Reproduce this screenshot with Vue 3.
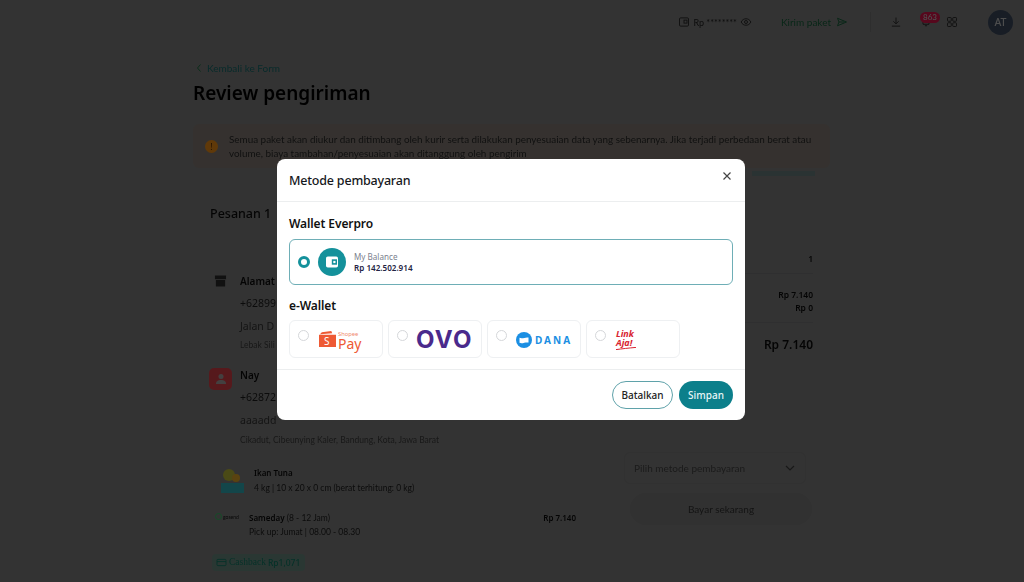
<script setup>
const ewallets = [
  { id: 'shopee' },
  { id: 'ovo' },
  { id: 'dana' },
  { id: 'link' },
]
</script>

<template>
  <div class="screen">
    <div class="page">
      <header class="topbar">
        <svg class="ic" viewBox="0 0 16 16"><rect x="2" y="2.500" width="12" height="11" rx="1.500"/><rect x="8" y="5.500" width="4" height="4"/></svg>
        <span class="balance">Rp ********</span>
        <svg class="ic eye" viewBox="0 0 16 16"><path d="M1.500 8C3 5 5.200 3.700 8 3.700S13 5 14.500 8C13 11 10.800 12.300 8 12.300S3 11 1.500 8Z"/><circle cx="8" cy="8" r="2"/></svg>
        <span class="send">Kirim paket</span>
        <svg class="ic green" viewBox="0 0 16 16"><path d="M2 3l12 5-12 5 2-5zM4 8h7"/></svg>
        <i class="vline"></i>
        <svg class="ic dl" viewBox="0 0 16 16"><path d="M8 2v8M4.500 7L8 10.500 11.500 7M2.500 13.500h11"/></svg>
        <span class="bell"><svg class="ic" viewBox="0 0 16 16"><path d="M4 7a4 4 0 0 1 8 0v4H4zM6.500 13h3"/></svg><b class="badge">863</b></span>
        <svg class="ic apps" viewBox="0 0 16 16"><rect x="2" y="2" width="5" height="5" rx="1"/><rect x="9" y="2" width="5" height="5" rx="1"/><rect x="2" y="9" width="5" height="5" rx="1"/><rect x="9" y="9" width="5" height="5" rx="1"/></svg>
        <span class="avatar">AT</span>
      </header>

      <main class="content">
        <a class="back"><svg viewBox="0 0 8 10"><path d="M5.500 1.500L2.500 5l3 3.500"/></svg>Kembali ke Form</a>
        <h1>Review pengiriman</h1>
        <div class="alert">
          <span class="alert-ic">!</span>
          <p>Semua paket akan diukur dan ditimbang oleh kurir serta dilakukan penyesuaian data yang sebenarnya. Jika terjadi perbedaan berat atau volume, biaya tambahan/penyesuaian akan ditanggung oleh pengirim</p>
        </div>

        <div class="columns">
          <section class="order">
            <h2>Pesanan 1</h2>
            <div class="party first">
              <span class="party-ic store"><svg viewBox="0 0 14 14"><path d="M1 1h12v4H1zM2 6h10v7H2z"/></svg></span>
              <div>
                <strong>Alamat</strong>
                <p>+62899</p>
                <p class="muted">Jalan D</p>
                <small>Lebak Sili</small>
              </div>
            </div>
            <div class="party second">
              <span class="party-ic person"><svg viewBox="0 0 14 14"><circle cx="7" cy="4.500" r="2.500"/><path d="M2 12c0-3 2-4 5-4s5 1 5 4z"/></svg></span>
              <div>
                <strong>Nay</strong>
                <p>+62872</p>
                <p class="muted">aaaadd</p>
                <small>Cikadut, Cibeunying Kaler, Bandung, Kota, Jawa Barat</small>
              </div>
            </div>
            <div class="product">
              <svg class="thumb" viewBox="0 0 26 28"><circle cx="10" cy="8" r="6" fill="#b8b838"/><circle cx="17" cy="11" r="4" fill="#e0a828"/><rect x="2" y="16" width="23" height="10" fill="#30b0b8"/></svg>
              <div>
                <strong>Ikan Tuna</strong>
                <p>4 kg | 10 x 20 x 0 cm (berat terhitung: 0 kg)</p>
              </div>
            </div>
            <div class="courier">
              <span class="gosend"><i></i>gosend</span>
              <div class="courier-text">
                <p><strong>Sameday</strong> (8 - 12 Jam)</p>
                <p>Pick up: Jumat | 08.00 - 08.30</p>
              </div>
              <strong>Rp 7.140</strong>
            </div>
            <span class="cashback"><svg viewBox="0 0 12 10"><rect x="1" y="1.500" width="10" height="7" rx="1"/><path d="M1 4h10"/></svg>Cashback <b>Rp1,071</b></span>
          </section>

          <aside class="summary">
            <i class="accent"></i>
            <div class="sum-row first"><b>1</b></div>
            <div class="sum-row"><b>Rp 7.140</b></div>
            <div class="sum-row tight"><b>Rp 0</b></div>
            <div class="sum-row total"><b>Rp 7.140</b></div>
            <div class="select"><span>Pilih metode pembayaran</span><svg viewBox="0 0 12 12"><path d="M2 4l4 4 4-4"/></svg></div>
            <div class="pay">Bayar sekarang</div>
          </aside>
        </div>
      </main>
    </div>

    <div class="overlay">
      <div class="modal">
        <div class="modal-head">
          <span>Metode pembayaran</span>
          <svg class="close" viewBox="0 0 10 10"><path d="M1.500 1.500l7 7M8.500 1.500l-7 7"/></svg>
        </div>
        <div class="modal-body">
          <h3>Wallet Everpro</h3>
          <div class="balance-card">
            <span class="radio on"></span>
            <span class="wallet">
              <svg viewBox="0 0 14 14"><rect x="1" y="1.500" width="12" height="11" rx="1.800" fill="#fff"/><rect x="6.800" y="4.300" width="5.200" height="5.400" fill="#14919b"/><rect x="8.300" y="5.900" width="2.200" height="2.200" fill="#fff"/></svg>
            </span>
            <div class="balance-text">
              <span>My Balance</span>
              <b>Rp 142.502.914</b>
            </div>
          </div>
          <h3 class="second">e-Wallet</h3>
          <div class="wallets">
            <div v-for="w in ewallets" :key="w.id" class="wallet-card">
              <span class="radio"></span>
              <div v-if="w.id === 'shopee'" class="logo shopee">
                <svg viewBox="0 0 20 18"><path d="M2 4.500L15 3.500 14 1 4 2.500zM1 5h18v13H1z" fill="#ee5a34"/></svg>
                <em>S</em>
                <span class="sp"><small>Shopee</small><b>Pay</b></span>
              </div>
              <div v-else-if="w.id === 'ovo'" class="logo ovo">OVO</div>
              <div v-else-if="w.id === 'dana'" class="logo dana">
                <svg viewBox="0 0 16 16"><circle cx="8" cy="8" r="8" fill="#1b8fe3"/><path d="M3.500 5.800c3 1.400 6-1 9-.2v5c-3-.8-6 1.400-9 .2z" fill="#fff"/></svg>
                <span>DANA</span>
              </div>
              <div v-else class="logo link">
                <span>Link<br />Aja!</span>
                <svg viewBox="0 0 20 3"><path d="M0 2.600C6 1.800 13 1 20 .4" /></svg>
              </div>
            </div>
          </div>
        </div>
        <div class="modal-foot">
          <button class="btn ghost">Batalkan</button>
          <button class="btn solid">Simpan</button>
        </div>
      </div>
    </div>
  </div>
</template>

<style>
html, body { margin: 0; background: #fff; }
</style>

<style scoped>
* { box-sizing: border-box; }
.screen {
  position: relative;
  width: 1024px;
  height: 582px;
  overflow: hidden;
  font-family: "Noto Sans", Inter, sans-serif;
  color: #0c0c0c;
}
.page { height: 582px; overflow: hidden; background: #808080; filter: blur(.5px); }

.topbar { height: 44px; display: flex; align-items: center; justify-content: flex-end; padding-right: 11px; font-family: Lato, sans-serif; font-size: 9px; color: #1c1c1c; }
.ic { width: 12px; height: 12px; fill: none; stroke: #2a2a2a; stroke-width: 1.300; flex: none; }
.balance { margin-left: 3px; }
.eye { margin-left: 3px; }
.send { margin-left: 29px; font-size: 10px; color: #15603a; }
.green { stroke: #15603a; margin-left: 5px; }
.vline { width: 1px; height: 20px; background: #747474; margin: 0 19px 0 22px; }
.dl { margin-right: 18px; }
.bell { position: relative; display: block; height: 12px; width: 12px; margin-right: 14px; }
.badge { position: absolute; top: -4px; left: 0; width: 20px; text-align: center; background: #d8144a; border-radius: 6px; color: #c8c8c8; font-size: 8px; font-weight: 500; line-height: 11px; }
.apps { margin-right: 30px; }
.avatar { width: 25px; height: 25px; border-radius: 50%; background: #3c4a5e; color: #c0c0c0; display: flex; align-items: center; justify-content: center; font-family: "Noto Sans", sans-serif; font-size: 10.500px; font-weight: 500; }

.content { padding: 18px 0 0 193px; width: 830px; }
.back { display: flex; align-items: center; color: #166a6a; font-family: Lato, sans-serif; font-size: 10px; line-height: 12px; margin-left: 2px; }
.back svg { width: 8px; height: 10px; margin-right: 4px; fill: none; stroke: #187040; stroke-width: 1; }
h1 { margin: 7px 0 0; font-size: 19px; line-height: 24px; font-weight: 600; color: #000; }
.alert { margin-top: 19px; height: 44px; display: flex; align-items: center; gap: 11px; padding: 0 12px; background: #857c76; border-radius: 6px; }
.alert-ic { width: 13px; height: 13px; border-radius: 50%; background: #f09018; color: #5a3008; font-size: 9px; line-height: 13px; text-align: center; flex: none; }
.alert p { margin: 0; font-family: Lato, sans-serif; font-size: 9.900px; line-height: 14px; color: #2a2a2a; }

.columns { display: grid; grid-template-columns: 401px 220px; gap: 16px; margin-top: 27px; }
.order { padding: 11px 17px 0; }
h2 { margin: 0; font-size: 12.500px; line-height: 16px; font-weight: 500; color: #0c0c0c; }
.party { display: flex; gap: 8px; margin-top: 17px; font-size: 10.500px; margin-left: -1px; }
.party.first { margin-top: 52px; margin-left: 0; padding-left: 4px; gap: 13px; }
.party strong { display: block; font-weight: 600; font-size: 10px; line-height: 14px; }
.party p { margin: 8px 0 0; line-height: 14px; color: #1c1c1c; }
.party .muted { margin-top: 9px; color: #333; }
.party small { display: block; margin-top: 6px; font-family: Lato, sans-serif; font-size: 8.500px; line-height: 12px; color: #3c3c3c; }
.party.second small { margin-top: 7px; }
.party-ic { width: 23px; height: 22px; border-radius: 5px; flex: none; display: flex; align-items: center; justify-content: center; }
.party-ic svg { width: 14px; height: 14px; }
.party.first .store { width: 13px; height: 14px; }
.store svg path { fill: #2c2c2c; }
.person { background: #d84048; }
.person svg * { fill: #a8a0a0; }
.product { display: flex; gap: 9px; margin-top: 21px; padding-left: 9px; }
.thumb { width: 26px; height: 28px; flex: none; }
.product strong { font-size: 8px; font-weight: 600; display: block; line-height: 12px; margin-bottom: 3px; }
.product p { margin: 0; font-family: Lato, sans-serif; font-size: 8.500px; line-height: 12px; color: #1c1c1c; }
.courier { display: flex; margin-top: 16px; font-family: Lato, sans-serif; font-size: 8.500px; line-height: 14px; color: #1c1c1c; padding-left: 5px; margin-right: 1px; }
.courier strong { font-family: "Noto Sans", sans-serif; font-size: 8px; font-weight: 600; color: #0c0c0c; }
.courier p { margin: 0; }
.gosend { width: 34px; display: flex; align-items: flex-start; gap: 1px; font-size: 5px; line-height: 8px; color: #111; padding-top: 2px; }
.gosend i { width: 7px; height: 7px; border: 1.500px solid #30c060; border-radius: 50%; }
.courier-text { flex: 1; }
.cashback { display: inline-flex; align-items: center; margin: 15px 0 0 2px; padding: 2px 5px 2px 4px; background: #6a8a80; color: #0f7a64; font-family: "Liberation Serif", serif; font-size: 9.500px; line-height: 13px; border-radius: 4px; }
.cashback svg { width: 11px; height: 9px; margin-right: 2px; fill: none; stroke: #0f7a64; stroke-width: 1; }
.cashback b { font-weight: 500; font-size: 8.500px; margin-left: 2px; font-family: "Noto Sans", sans-serif; }

.summary { position: relative; padding-top: 57px; font-size: 8.500px; }
.accent { position: absolute; left: 142px; top: -24px; width: 63px; height: 5px; background: #6a8080; }
.sum-row { display: flex; justify-content: flex-end; margin: 0 17px 0 16px; line-height: 13px; }
.sum-row b { font-weight: 600; }
.sum-row.first { padding-bottom: 8px; margin-bottom: 14px; border-bottom: 1px solid #767778; }
.sum-row.tight { padding-bottom: 8px; border-bottom: 1px solid #767778; }
.sum-row.total { margin-top: 14px; font-size: 12px; line-height: 16px; }
.select { margin: 99px 24px 0 14px; height: 32px; padding: 0 9px; display: flex; align-items: center; justify-content: space-between; border: 1px solid #7a7a7a; border-radius: 6px; color: #444; font-family: Lato, sans-serif; font-size: 10px; }
.select svg { width: 12px; height: 12px; fill: none; stroke: #3c3c3c; stroke-width: 1.200; }
.pay { margin: 9px 18px 0 20px; height: 32px; border-radius: 16px; background: #7a7a7a; color: #333; font-family: Lato, sans-serif; font-size: 10px; display: flex; align-items: center; justify-content: center; }

.overlay { position: absolute; inset: 0; background: rgba(0,0,0,.6); display: flex; justify-content: center; padding: 159px 2px 0 0; align-items: flex-start; }
.modal { width: 468px; height: 261px; background: #fff; border-radius: 8px; display: flex; flex-direction: column; }
.modal-head { height: 43px; flex: none; display: flex; align-items: center; justify-content: space-between; padding: 0 13px 0 12px; border-bottom: 1px solid #eceeef; font-size: 12.500px; letter-spacing: -.2px; font-weight: 500; color: #16181c; }
.close { width: 10px; height: 10px; margin-top: -9px; fill: none; stroke: #444; stroke-width: 1.200; }
.modal-body { flex: 1; padding: 14px 12px 0; }
h3 { margin: 0; font-size: 12px; letter-spacing: -.1px; line-height: 16px; font-weight: 600; color: #111; }
h3.second { margin-top: 13px; }
.balance-card { margin-top: 7px; height: 46px; border: 1px solid #6eaeb6; border-radius: 6px; display: flex; align-items: center; padding-left: 8px; }
.radio { width: 11px; height: 11px; border: 1px solid #d5d7da; border-radius: 50%; flex: none; background: #fff; }
.radio.on { border: 3px solid #14919b; width: 12px; height: 12px; }
.wallet { width: 28px; height: 28px; margin-left: 8px; border-radius: 50%; background: #14919b; display: flex; align-items: center; justify-content: center; }
.wallet svg { width: 14px; height: 14px; }
.balance-text { margin-left: 8px; display: flex; flex-direction: column; font-size: 8.100px; line-height: 11px; color: #7b7f8e; }
.balance-text b { color: #1f2444; font-weight: 600; }
.wallets { margin-top: 6px; display: flex; gap: 5px; }
.wallet-card { position: relative; width: 94px; height: 38px; border: 1px solid #eef0f2; border-radius: 6px; }
.wallet-card .radio { position: absolute; left: 8px; top: 9px; }
.logo { position: absolute; }
.shopee { left: 28px; top: 9px; width: 44px; height: 20px; }
.shopee svg { position: absolute; left: 0; top: 0; width: 19px; height: 17px; }
.shopee em { position: absolute; left: 6px; top: 5px; color: #fff; font-style: normal; font-size: 10px; line-height: 12px; }
.sp { position: absolute; left: 20px; top: 1px; display: flex; flex-direction: column; color: #ee5a34; }
.sp small { font-size: 5.800px; line-height: 6px; color: #f08a70; }
.sp b { font-weight: 400; font-size: 14px; line-height: 13px; }
.ovo { left: 27px; top: 4px; font-family: Inter, sans-serif; font-size: 24px; line-height: 29px; font-weight: 700; color: #4a2a8c; letter-spacing: 1.200px; }
.dana { left: 28px; top: 11px; display: flex; align-items: center; gap: 3px; }
.dana svg { width: 16px; height: 16px; }
.dana span { color: #1b8fe3; font-size: 10px; font-weight: 700; letter-spacing: 2px; }
.link { left: 29px; top: 8px; width: 20px; }
.link span { display: block; color: #d8232f; font-size: 9px; line-height: 9px; font-weight: 700; font-style: italic; }
.link svg { display: block; width: 20px; height: 3px; fill: none; stroke: #d8232f; stroke-width: 1; }
.modal-foot { height: 51px; flex: none; border-top: 1px solid #eceeef; display: flex; justify-content: flex-end; gap: 6px; padding: 11px 12px 0 0; }
.btn { height: 28px; border-radius: 14px; font: 500 10px "Noto Sans", sans-serif; padding: 0; }
.ghost { width: 61px; background: #fff; border: 1px solid #5fa2aa; color: #222; }
.solid { width: 54px; background: #0c7f8b; border: 0; color: #e8f6f7; }
</style>
